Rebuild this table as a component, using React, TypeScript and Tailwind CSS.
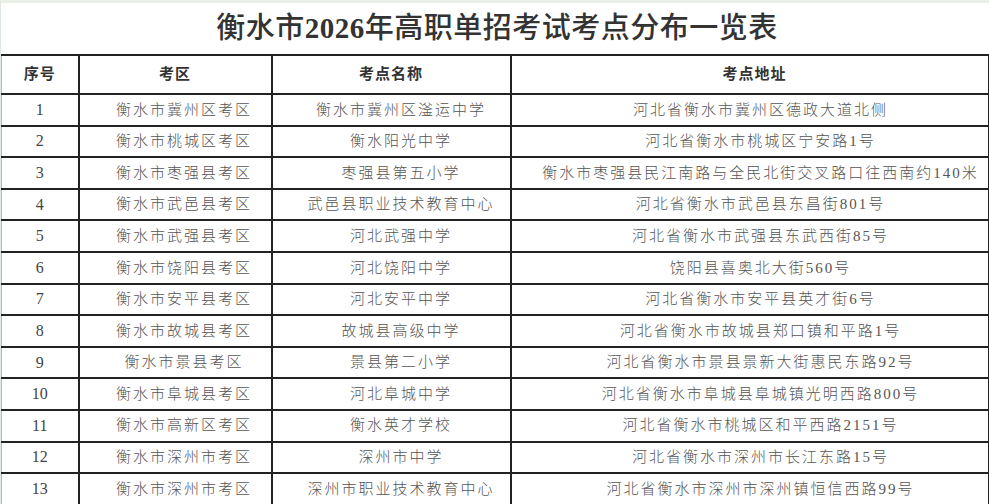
const rows: [string, string, string][] = [
  ['衡水市冀州区考区', '衡水市冀州区滏运中学', '河北省衡水市冀州区德政大道北侧'],
  ['衡水市桃城区考区', '衡水阳光中学', '河北省衡水市桃城区宁安路1号'],
  ['衡水市枣强县考区', '枣强县第五小学', '衡水市枣强县民江南路与全民北街交叉路口往西南约140米'],
  ['衡水市武邑县考区', '武邑县职业技术教育中心', '河北省衡水市武邑县东昌街801号'],
  ['衡水市武强县考区', '河北武强中学', '河北省衡水市武强县东武西街85号'],
  ['衡水市饶阳县考区', '河北饶阳中学', '饶阳县喜奥北大街560号'],
  ['衡水市安平县考区', '河北安平中学', '河北省衡水市安平县英才街6号'],
  ['衡水市故城县考区', '故城县高级中学', '河北省衡水市故城县郑口镇和平路1号'],
  ['衡水市景县考区', '景县第二小学', '河北省衡水市景县景新大街惠民东路92号'],
  ['衡水市阜城县考区', '河北阜城中学', '河北省衡水市阜城县阜城镇光明西路800号'],
  ['衡水市高新区考区', '衡水英才学校', '河北省衡水市桃城区和平西路2151号'],
  ['衡水市深州市考区', '深州市中学', '河北省衡水市深州市长江东路15号'],
  ['衡水市深州市考区', '深州市职业技术教育中心', '河北省衡水市深州市深州镇恒信西路99号'],
];

const font = { fontFamily: '"Liberation Serif", "Noto Sans CJK SC", serif' };

export default function App() {
  return (
    <div className="w-[989px] h-[504px] overflow-hidden bg-white border-t-[3px] border-t-[#e8f0e8] border-l border-l-[#dfe8df]" style={font}>
      <h1 className="h-[51px] flex items-center justify-center text-[29px] font-medium text-[#333] tracking-[0.5px] pl-[4px]">
        衡水市<span className="font-bold">2026</span>年高职单招考试考点分布一览表
      </h1>
      <table className="w-[987px] border-collapse table-fixed">
        <colgroup>
          <col className="w-[77px]" />
          <col className="w-[193px]" />
          <col className="w-[239px]" />
          <col className="w-[478px]" />
        </colgroup>
        <thead>
          <tr className="h-[39px]">
            {['序号', '考区', '考点名称', '考点地址'].map((h, i) => (
              <th
                key={h}
                className={`border-2 border-[#222] ${i === 0 ? 'border-l border-l-[#bbb]' : ''} ${i === 3 ? 'pl-[10px]' : ''} text-[15px] font-bold text-[#333] tracking-[1px] text-center`}
              >
                {h}
              </th>
            ))}
          </tr>
        </thead>
        <tbody>
          {rows.map((r, idx) => (
            <tr key={idx} className="h-[31.6px]">
              <td className="border-2 border-[#222] border-l border-l-[#bbb] text-center text-[16px] text-[#444]">{idx + 1}</td>
              <td className="border-2 border-[#222] pl-[18px] text-center text-[15px] font-light text-[#555] tracking-[2px] whitespace-nowrap">{r[0]}</td>
              <td className="border-2 border-[#222] pl-[20px] text-center text-[15px] font-light text-[#555] tracking-[2px] whitespace-nowrap">{r[1]}</td>
              <td className="border-2 border-[#222] pl-[22px] text-center text-[15px] font-light text-[#555] tracking-[2px] whitespace-nowrap">{r[2]}</td>
            </tr>
          ))}
        </tbody>
      </table>
    </div>
  );
}
